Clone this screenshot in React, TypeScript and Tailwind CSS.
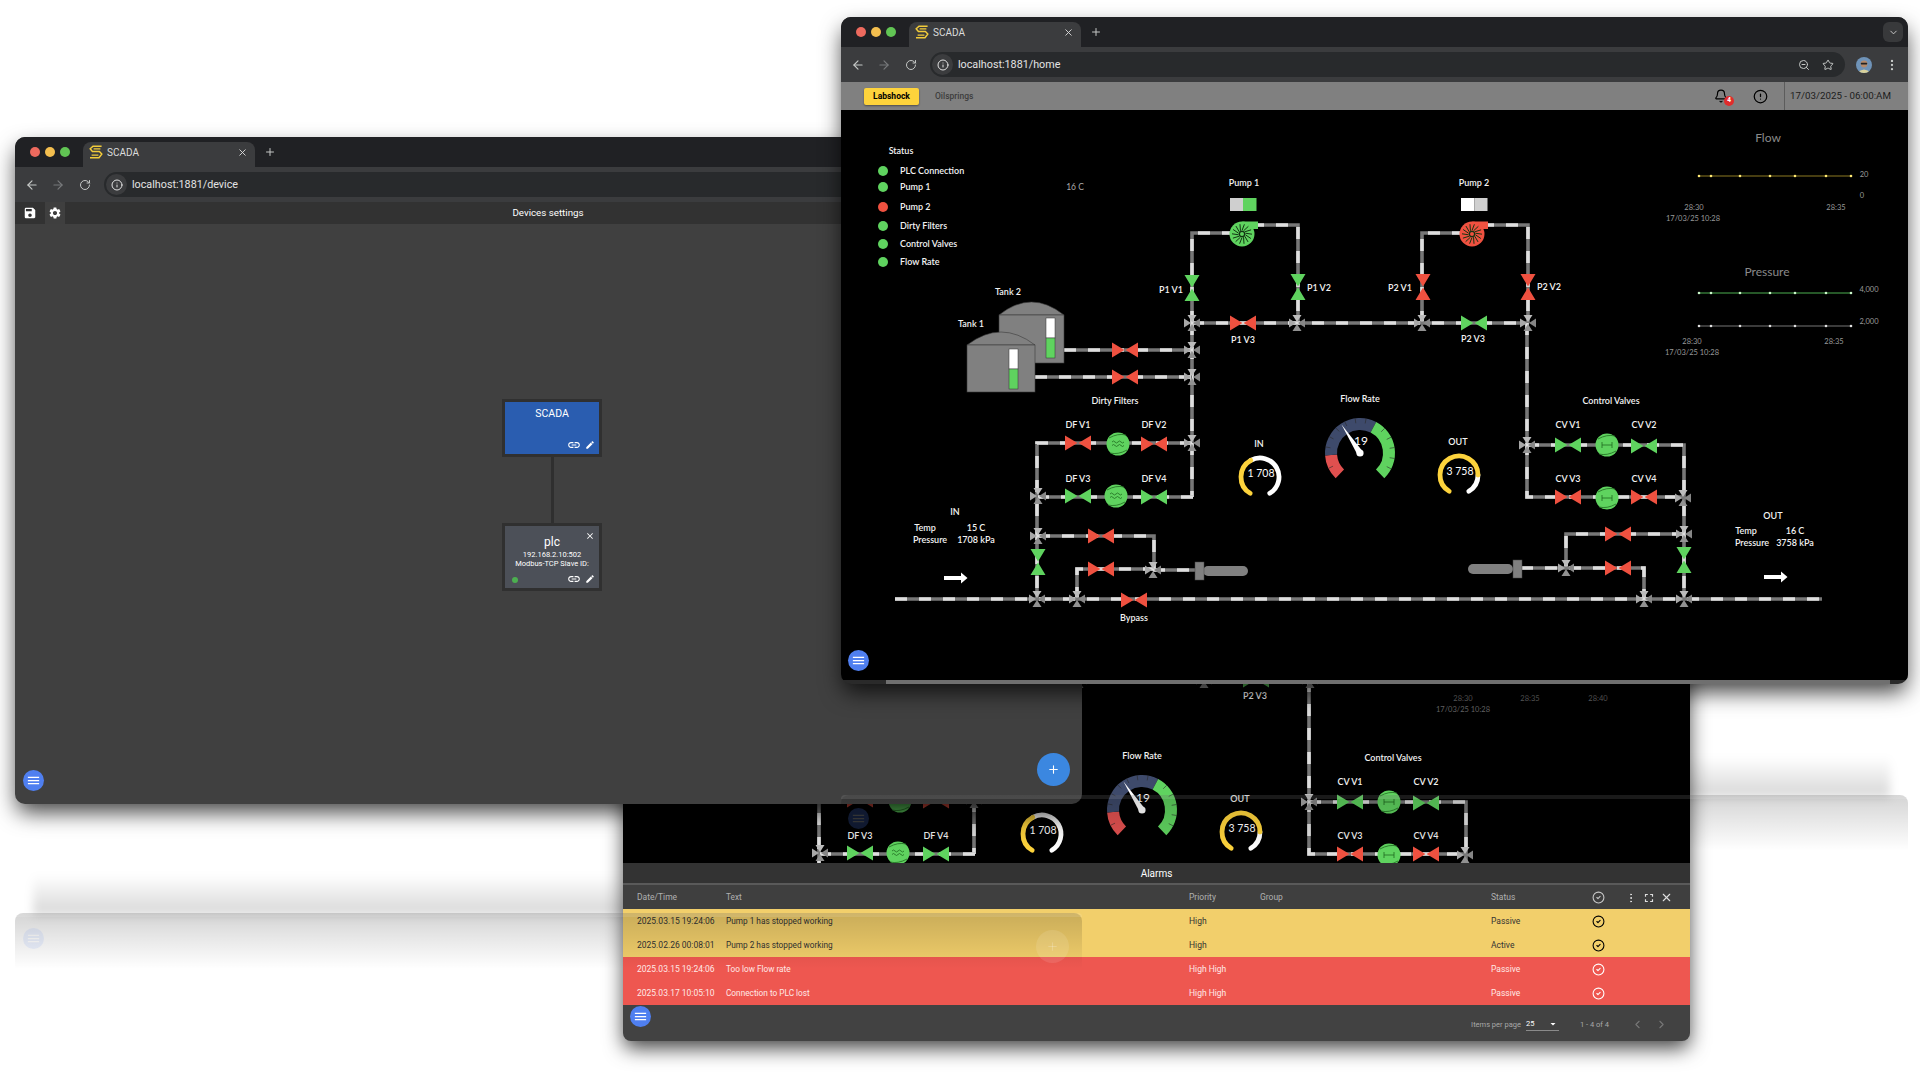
import { ArrowLeft, ArrowRight, RotateCw, Info, ZoomOut, Star, X, Plus, ChevronDown, EllipsisVertical, Bell, CircleAlert, CircleCheck, ChevronLeft, ChevronRight } from "lucide-react";
import { MdSave, MdSettings, MdLink, MdEdit, MdClose, MdMenu, MdFullscreen, MdArrowDropDown } from "react-icons/md";

const GREEN = "#5fd35f";
const RED = "#ef5140";

// pipes are written in the coordinates of the big window on the 1920 canvas
const PIPES = [
  "M1192 323 V233 H1232",
  "M1252 225 H1298 V323",
  "M1422 323 V233 H1462",
  "M1482 225 H1528 V323",
  "M1192 323 H1528",
  "M1192 323 V497",
  "M1064 350 H1192",
  "M1035 377 H1192",
  "M1192 443 H1037 V599",
  "M1193 497 H1038",
  "M1038 536 H1154 V570",
  "M1077 599 V569 H1153",
  "M1153 570 H1203",
  "M895 599 H1822",
  "M1527 323 V497 H1683",
  "M1527 445 H1684 V599",
  "M1684 534 H1566 V568",
  "M1521 568 H1644 V599",
];

const H_VALVES: [number, number, string][] = [
  [1243, 323, RED], [1474, 323, GREEN], [1125, 350, RED], [1125, 377, RED],
  [1078, 443, RED], [1154, 444, RED], [1078, 496, GREEN], [1154, 497, GREEN],
  [1101, 536, RED], [1101, 569, RED], [1134, 600, RED],
  [1568, 445, GREEN], [1644, 446, GREEN], [1568, 497, RED], [1644, 497, RED],
  [1618, 534, RED], [1618, 568, RED],
];

const V_VALVES: [number, number, string][] = [
  [1192, 288, GREEN], [1298, 287, GREEN], [1423, 287, RED], [1528, 287, RED],
  [1038, 562, GREEN], [1684, 560, GREEN],
];

const JUNCTIONS = [
  [1192, 323], [1297, 323], [1422, 323], [1528, 323], [1192, 350], [1192, 377], [1192, 443],
  [1038, 496], [1038, 536], [1037, 599], [1077, 599], [1153, 570],
  [1527, 445], [1683, 498], [1684, 534], [1566, 568], [1644, 599], [1684, 599],
];

const LABELS: [string, number, number][] = [
  ["Status", 901, 150],
  ["Pump 1", 1244, 182], ["Pump 2", 1474, 182],
  ["P1 V1", 1171, 289], ["P1 V2", 1319, 287], ["P2 V1", 1400, 287], ["P2 V2", 1549, 286],
  ["P1 V3", 1243, 339], ["P2 V3", 1473, 338],
  ["Tank 2", 1008, 291], ["Tank 1", 971, 323],
  ["Dirty Filters", 1115, 400], ["DF V1", 1078, 424], ["DF V2", 1154, 424], ["DF V3", 1078, 478], ["DF V4", 1154, 478],
  ["Bypass", 1134, 617], ["Flow Rate", 1360, 398],
  ["IN", 1259, 443], ["OUT", 1458, 441],
  ["Control Valves", 1611, 400], ["CV V1", 1568, 424], ["CV V2", 1644, 424], ["CV V3", 1568, 478], ["CV V4", 1644, 478],
  ["IN", 955, 511], ["Temp", 925, 527], ["15 C", 976, 527], ["Pressure", 930, 539], ["1708 kPa", 976, 539],
  ["OUT", 1773, 515], ["Temp", 1746, 530], ["16 C", 1795, 530], ["Pressure", 1752, 542], ["3758 kPa", 1795, 542],
];

const STATUS: [string, number, string][] = [
  ["PLC Connection", 171, GREEN], ["Pump 1", 187, GREEN], ["Pump 2", 207, RED],
  ["Dirty Filters", 226, GREEN], ["Control Valves", 244, GREEN], ["Flow Rate", 262, GREEN],
];

const DOT_X = [1699, 1711, 1740, 1770, 1795, 1826, 1851];

function polar(cx: number, cy: number, r: number, deg: number) {
  const a = ((deg - 90) * Math.PI) / 180;
  return [cx + r * Math.cos(a), cy + r * Math.sin(a)];
}

function arc(cx: number, cy: number, r: number, from: number, to: number) {
  const [x1, y1] = polar(cx, cy, r, from);
  const [x2, y2] = polar(cx, cy, r, to);
  return `M${x1} ${y1} A${r} ${r} 0 ${to - from > 180 ? 1 : 0} 1 ${x2} ${y2}`;
}

function Label({ x, y, children, className = "fill-[#f2f2f2] text-[9px] font-semibold" }: { x: number; y: number; children: React.ReactNode; className?: string }) {
  return (
    <text x={x} y={y} textAnchor="middle" dominantBaseline="central" className={className}>
      {children}
    </text>
  );
}

function HValve({ x, y, color }: { x: number; y: number; color: string }) {
  return <path d={`M${x - 13} ${y - 7.5} L${x - 0.5} ${y} L${x - 13} ${y + 7.5}Z M${x + 13} ${y - 7.5} L${x + 0.5} ${y} L${x + 13} ${y + 7.5}Z`} fill={color} />;
}

function VValve({ x, y, color }: { x: number; y: number; color: string }) {
  return <path d={`M${x - 7.5} ${y - 13} L${x} ${y - 0.5} L${x + 7.5} ${y - 13}Z M${x - 7.5} ${y + 13} L${x} ${y + 0.5} L${x + 7.5} ${y + 13}Z`} fill={color} />;
}

function Junction({ x, y }: { x: number; y: number }) {
  return (
    <g>
      <path d={`M${x - 8} ${y - 4.5} L${x - 1} ${y} L${x - 8} ${y + 4.5}Z`} fill="#a8a8a8" />
      <path d={`M${x + 8} ${y - 4.5} L${x + 1} ${y} L${x + 8} ${y + 4.5}Z`} fill="#868686" />
      <path d={`M${x - 4.5} ${y - 8} L${x} ${y - 1} L${x + 4.5} ${y - 8}Z`} fill="#bcbcbc" />
      <path d={`M${x - 4.5} ${y + 8} L${x} ${y + 1} L${x + 4.5} ${y + 8}Z`} fill="#919191" />
    </g>
  );
}

function Pump({ x, y, color }: { x: number; y: number; color: string }) {
  return (
    <g>
      <path d={`M${x} ${y - 12.5} H${x + 16} V${y - 5} H${x + 10} Z`} fill={color} />
      <circle cx={x} cy={y} r={12.5} fill={color} />
      {Array.from({ length: 14 }).map((_, i) => {
        const a = (i * 360) / 14;
        const [x1, y1] = polar(x, y, 3.5, a);
        const [x2, y2] = polar(x, y, 10, a + 14);
        return <line key={i} x1={x1} y1={y1} x2={x2} y2={y2} stroke="#123312" strokeWidth="1" />;
      })}
      <circle cx={x} cy={y} r={2.6} fill={color} stroke="#123312" strokeWidth="1.2" />
    </g>
  );
}

function Rotor({ x, y, wave }: { x: number; y: number; wave: boolean }) {
  return (
    <g>
      <circle cx={x} cy={y} r={11.5} fill={GREEN} />
      <path d={`M${x - 9} ${y - 6} Q${x} ${y - 11} ${x + 8} ${y - 9} M${x - 8} ${y + 9} Q${x} ${y + 11} ${x + 9} ${y + 6}`} stroke="#1f6b1f" strokeWidth="0.8" fill="none" />
      {wave ? (
        <path d={`M${x - 6} ${y - 2} q1.5 -2 3 0 t3 0 t3 0 t3 0 M${x - 6} ${y + 1.5} q1.5 -2 3 0 t3 0 t3 0 t3 0`} stroke="#1f6b1f" strokeWidth="0.8" fill="none" />
      ) : (
        <path d={`M${x - 5} ${y - 3} V${y + 3} M${x + 5} ${y - 3} V${y + 3} M${x - 5} ${y} H${x + 5}`} stroke="#1f6b1f" strokeWidth="0.8" fill="none" />
      )}
    </g>
  );
}

function Tank({ x, y, w, h, dome, levelX, levelTop, levelMid, levelBottom }: { x: number; y: number; w: number; h: number; dome: number; levelX: number; levelTop: number; levelMid: number; levelBottom: number }) {
  return (
    <g>
      <path d={`M${x} ${y} Q${x + w / 2} ${y - dome * 2} ${x + w} ${y}Z`} fill="#808080" stroke="#3a3a3a" strokeWidth="0.6" />
      <rect x={x} y={y} width={w} height={h} fill="#808080" stroke="#3a3a3a" strokeWidth="0.6" />
      <rect x={levelX} y={levelTop} width={9} height={levelMid - levelTop} fill="#fff" stroke="#333" strokeWidth="0.5" />
      <rect x={levelX} y={levelMid} width={9} height={levelBottom - levelMid} fill={GREEN} stroke="#333" strokeWidth="0.5" />
    </g>
  );
}

function RingGauge({ x, y, split, value }: { x: number; y: number; split: number; value: string }) {
  return (
    <g fill="none" strokeWidth="4.8" strokeLinecap="round">
      <path d={arc(x, y, 19, split, 149)} stroke="#fff" />
      <path d={arc(x, y, 19, -149, split)} stroke="#fdd33c" />
      <Label x={x + 1} y={y - 4} className="fill-white text-[10.5px]">{value}</Label>
    </g>
  );
}

function FlowGauge() {
  const cx = 1360;
  const cy = 453;
  const [nx, ny] = polar(cx, cy, 34, -33);
  const [b1x, b1y] = polar(cx, cy, 3, 57);
  const [b2x, b2y] = polar(cx, cy, 3, -123);
  return (
    <g>
      <g fill="none" strokeWidth="12">
        <path d={arc(cx, cy, 29, -136, -94)} stroke="#e0504f" />
        <path d={arc(cx, cy, 29, -94, 27.5)} stroke="#3e4a6b" />
        <path d={arc(cx, cy, 29, 27.5, 136)} stroke={GREEN} />
      </g>
      {[-116, -80, -62, -44, -26, -8, 10, 45, 63, 81, 99, 117].map((a) => {
        const [x1, y1] = polar(cx, cy, 30, a);
        const [x2, y2] = polar(cx, cy, 35, a);
        return <line key={a} x1={x1} y1={y1} x2={x2} y2={y2} stroke="#2a2a2a" strokeWidth="0.6" />;
      })}
      <Label x={cx + 1} y={cy - 13} className="fill-white text-[12px]">19</Label>
      <path d={`M${nx} ${ny} L${b1x} ${b1y} L${b2x} ${b2y}Z`} fill="#fff" />
      <circle cx={cx} cy={cy} r={3.6} fill="#fff" />
    </g>
  );
}

function TrendLine({ y, line, dot }: { y: number; line: string; dot: string }) {
  return (
    <g>
      <line x1={1699} x2={1851} y1={y} y2={y} stroke={line} strokeWidth="1" />
      {DOT_X.map((x) => (
        <circle key={x} cx={x} cy={y} r={1.3} fill={dot} />
      ))}
    </g>
  );
}

const AXIS = "fill-[#9a9a9a] text-[7.5px]";

function Charts() {
  return (
    <g>
      <Label x={1768} y={137} className="fill-[#8a8a8a] text-[12px]">Flow</Label>
      <TrendLine y={176} line="#8d7a22" dot="#ffe974" />
      <Label x={1864} y={174} className={AXIS}>20</Label>
      <Label x={1862} y={195} className={AXIS}>0</Label>
      <Label x={1694} y={207} className={AXIS}>28:30</Label>
      <Label x={1836} y={207} className={AXIS}>28:35</Label>
      <Label x={1693} y={218} className={AXIS}>17/03/25 10:28</Label>

      <Label x={1767} y={271} className="fill-[#8a8a8a] text-[12px]">Pressure</Label>
      <TrendLine y={293} line="#4caf50" dot="#c9f7c9" />
      <TrendLine y={326} line="#777" dot="#e0e0e0" />
      <Label x={1869} y={289} className={AXIS}>4,000</Label>
      <Label x={1869} y={321} className={AXIS}>2,000</Label>
      <Label x={1692} y={341} className={AXIS}>28:30</Label>
      <Label x={1834} y={341} className={AXIS}>28:35</Label>
      <Label x={1692} y={352} className={AXIS}>17/03/25 10:28</Label>
    </g>
  );
}

function ScadaDiagram({ height, lower }: { height: number; lower?: boolean }) {
  return (
    <svg width={1067} height={height} viewBox={`841 110 1067 ${height}`} className="block shrink-0 bg-black font-['Lato',sans-serif]">
      {PIPES.map((d) => (
        <g key={d} fill="none" strokeWidth="3.6">
          <path d={d} stroke="#777" />
          <path d={d} stroke="#dedede" strokeDasharray="12 12" />
        </g>
      ))}
      {JUNCTIONS.map(([x, y]) => <Junction key={`${x}-${y}`} x={x} y={y} />)}
      {H_VALVES.map(([x, y, c]) => <HValve key={`${x}-${y}`} x={x} y={y} color={c} />)}
      {V_VALVES.map(([x, y, c]) => <VValve key={`${x}-${y}`} x={x} y={y} color={c} />)}

      <Pump x={1242} y={234} color={GREEN} />
      <Pump x={1472} y={234} color={RED} />
      <rect x={1230} y={198} width={13} height={13} fill="#cfcfcf" />
      <rect x={1243} y={198} width={13.5} height={13} fill={GREEN} />
      <rect x={1461} y={198} width={13.5} height={13} fill="#fff" />
      <rect x={1474.5} y={198} width={13} height={13} fill="#cfcfcf" />

      <Rotor x={1118} y={444} wave />
      <Rotor x={1116} y={496} wave />
      <Rotor x={1607} y={445} wave={false} />
      <Rotor x={1607} y={498} wave={false} />

      <Tank x={999} y={315} w={65} h={48} dome={13} levelX={1046} levelTop={318} levelMid={338} levelBottom={358} />
      <Tank x={967} y={345} w={68} h={47} dome={13} levelX={1009} levelTop={349} levelMid={369} levelBottom={389} />

      <rect x={1203} y={566} width={45} height={10} rx={5} fill="#808080" />
      <rect x={1195} y={562} width={9} height={18} fill="#808080" stroke="#444" strokeWidth="0.5" />
      <rect x={1468} y={564} width={45} height={10} rx={5} fill="#808080" />
      <rect x={1513} y={560} width={9} height={18} fill="#808080" stroke="#444" strokeWidth="0.5" />

      <path d="M944 576 H961 V572.5 L967.5 578 L961 583.5 V580 H944Z" fill="#fff" />
      <path d="M1764 575 H1781 V571.5 L1787.5 577 L1781 582.5 V579 H1764Z" fill="#fff" />

      <RingGauge x={1260} y={477} split={-29} value="1 708" />
      <RingGauge x={1459} y={475} split={90} value="3 758" />
      <FlowGauge />

      {LABELS.map(([t, x, y]) => (
        <Label key={`${t}-${x}`} x={x} y={y}>{t}</Label>
      ))}
      {STATUS.map(([t, y, c]) => (
        <g key={t}>
          <circle cx={883} cy={y} r={5} fill={c} />
          <text x={900} y={y - 1} dominantBaseline="central" className="fill-[#f2f2f2] text-[9px] font-semibold">{t}</text>
        </g>
      ))}
      <Label x={1075} y={187} className="fill-[#aaa] text-[8.5px]">16 C</Label>

      {lower ? (
        <g>
          <Label x={1681} y={341} className="fill-[#666] text-[7.5px]">28:30</Label>
          <Label x={1748} y={341} className="fill-[#666] text-[7.5px]">28:35</Label>
          <Label x={1816} y={341} className="fill-[#666] text-[7.5px]">28:40</Label>
          <Label x={1681} y={352} className="fill-[#666] text-[7.5px]">17/03/25 10:28</Label>
        </g>
      ) : (
        <Charts />
      )}
    </svg>
  );
}

function Favicon() {
  return (
    <svg width="14" height="14" viewBox="0 0 14 14" fill="none" stroke="#f2cb3a" strokeWidth="1.5">
      <path d="M12.6 1.2 H4 L1.2 3.8 L3.4 6.4 H10.4 L12.8 9 L10 12.8 H1" />
      <path d="M11.4 3.8 H4.6 M2.6 10.2 H9.4" strokeWidth="1.2" />
    </svg>
  );
}

function Avatar() {
  return (
    <svg width="16" height="16" viewBox="0 0 16 16" className="rounded-full">
      <rect width="16" height="16" fill="#6f93b8" />
      <path d="M1 16 Q8 9 15 16Z" fill="#d9d29c" />
      <circle cx="8" cy="7" r="3.4" fill="#b58a6a" />
      <rect x="4.8" y="5.8" width="6.4" height="1.6" rx="0.6" fill="#222" />
    </svg>
  );
}

function Chrome({ url, wide }: { url: string; wide?: boolean }) {
  return (
    <div className="shrink-0">
      <div className="relative flex h-[30px] items-end bg-[#202124] pl-[68px]">
        <div className="absolute left-[15px] top-[10px] flex gap-[5px]">
          <span className="h-[10px] w-[10px] rounded-full bg-[#ed6a5e]" />
          <span className="h-[10px] w-[10px] rounded-full bg-[#f4bf4f]" />
          <span className="h-[10px] w-[10px] rounded-full bg-[#61c554]" />
        </div>
        <div className="flex h-[25px] w-[172px] items-center rounded-t-[8px] bg-[#3b3c3e] pb-[5px] pl-[6px] pr-[7px]">
          <Favicon />
          <span className="ml-[4px] flex-1 text-[10px] text-[#dcdcdc]">SCADA</span>
          <X size={11} className="text-[#dcdcdc]" />
        </div>
        <Plus size={12} className="mb-[9px] ml-[9px] text-[#c4c7c5]" />
        {wide && (
          <div className="absolute right-[5px] top-[5px] flex h-[20px] w-[20px] items-center justify-center rounded-[6px] bg-[#38393b]">
            <ChevronDown size={11} className="text-[#d0d0d0]" />
          </div>
        )}
      </div>
      <div className="flex h-[35px] items-center bg-[#3b3c3e] pl-[10px]">
        <ArrowLeft size={14} className="text-[#c4c7c5]" />
        <ArrowRight size={14} className="ml-[12px] text-[#77797b]" />
        <RotateCw size={12} className="ml-[14px] text-[#c4c7c5]" />
        <div className="ml-[13px] flex h-[25px] flex-1 items-center rounded-l-full rounded-r-full bg-[#282a2c] pl-[2px]">
          <span className="flex h-[21px] w-[21px] items-center justify-center rounded-full bg-[#3b3c3e]">
            <Info size={12} className="text-[#e3e3e3]" />
          </span>
          <span className="ml-[5px] flex-1 pt-[1px] text-[10.75px] text-[#e3e3e3]">{url}</span>
          {wide && <ZoomOut size={12} className="text-[#c4c7c5]" />}
          {wide && <Star size={12} className="ml-[12px] mr-[11px] text-[#c4c7c5]" />}
        </div>
        {wide && (
          <div className="flex items-center">
            <span className="ml-[11px]"><Avatar /></span>
            <EllipsisVertical size={14} className="ml-[13px] mr-[9px] text-[#c4c7c5]" />
          </div>
        )}
      </div>
    </div>
  );
}

function MenuButton() {
  return (
    <span className="flex h-[21px] w-[21px] items-center justify-center rounded-full bg-[#4f7ff0] text-white">
      <MdMenu size={15} />
    </span>
  );
}

function DeviceNode({ children, fill, close, dot }: { children?: React.ReactNode; fill: string; close?: boolean; dot?: boolean }) {
  return (
    <div className={`relative flex w-[100px] flex-col items-center border-[3px] border-[#303030] text-white ${fill}`}>
      {close && <MdClose size={10} className="absolute right-[4px] top-[5px]" />}
      {children}
      {dot && <span className="absolute bottom-[5px] left-[7px] h-[6px] w-[6px] rounded-full bg-[#4caf50]" />}
      <div className="absolute bottom-[2px] right-[4px] flex items-center gap-[4px]">
        <MdLink size={14} />
        <MdEdit size={10} />
      </div>
    </div>
  );
}

function DevicesWindow() {
  return (
    <div className="absolute left-[15px] top-[137px] flex h-[667px] w-[1067px] flex-col overflow-hidden rounded-[10px] bg-[#404040] shadow-[0_10px_22px_-2px_rgba(0,0,0,0.75)]">
      <Chrome url="localhost:1881/device" />
      <div className="relative flex h-[22px] shrink-0 items-center bg-[#323232] text-white">
        <span className="flex h-[22px] w-[30px] items-center justify-center"><MdSave size={14} /></span>
        <span className="flex h-[22px] w-[20px] items-center justify-center bg-[#3f3f3f]"><MdSettings size={14} /></span>
        <span className="absolute left-[493px] w-[80px] text-center text-[9.75px]">Devices settings</span>
      </div>
      <div className="relative flex-1">
        <div className="absolute left-[487px] top-[175px] flex flex-col items-center">
          <DeviceNode fill="h-[58px] bg-[#2a5db0]">
            <span className="mt-[4px] text-[10.5px]">SCADA</span>
          </DeviceNode>
          <div className="h-[66px] w-[3px] bg-[#2f2f2f]" />
          <DeviceNode fill="h-[68px] bg-[#4c5058]" close dot>
            <span className="mt-[9px] text-[12px] leading-[14px]">plc</span>
            <span className="mt-[1px] text-[7.5px] leading-[9px]">192.168.2.10:502</span>
            <span className="text-[7.5px] leading-[9px]">Modbus-TCP Slave ID:</span>
          </DeviceNode>
        </div>
        <span className="absolute bottom-[13px] left-[8px]"><MenuButton /></span>
        <span className="absolute bottom-[18px] right-[12px] flex h-[33px] w-[33px] items-center justify-center rounded-full bg-[#3b87e0] text-white">
          <Plus size={13} />
        </span>
      </div>
    </div>
  );
}

function HomeWindow() {
  return (
    <div className="absolute left-[841px] top-[17px] flex h-[667px] w-[1067px] flex-col overflow-hidden rounded-[10px] bg-[#2a2a2a] shadow-[0_10px_22px_-2px_rgba(0,0,0,0.75)]">
      <Chrome url="localhost:1881/home" wide />
      <div className="flex h-[28px] shrink-0 items-center bg-[#808080] pl-[23px]">
        <span className="flex h-[17px] w-[55px] items-center justify-center rounded-[2px] bg-[#fdd33c] text-[8.5px] font-bold text-black shadow-[0_1px_2px_rgba(0,0,0,0.4)]">Labshock</span>
        <span className="ml-[16px] text-[8.5px] font-medium text-[#3d3d3d]">Oilsprings</span>
        <span className="relative ml-auto text-black">
          <Bell size={14} />
          <span className="absolute -right-[6px] -bottom-[3px] flex h-[10px] w-[10px] items-center justify-center rounded-full bg-[#e02c2c] text-[6.5px] font-bold text-white">4</span>
        </span>
        <CircleAlert size={15} className="ml-[25px] text-black" />
        <span className="ml-[16px] flex h-[28px] w-[124px] items-center border-l border-[#5c5c5c] pl-[5px] text-[9.75px] text-[#1c1c1c]">17/03/2025 - 06:00:AM</span>
      </div>
      <div className="relative h-[570px] shrink-0">
        <ScadaDiagram height={570} />
        <span className="absolute bottom-[9px] left-[7px]"><MenuButton /></span>
      </div>
      <div className="ml-[45px] mr-[18px] h-[4px] shrink-0 bg-[#6f6f6f]" />
    </div>
  );
}

const ROWS = [
  { date: "2025.03.15 19:24:06", text: "Pump 1 has stopped working", priority: "High", status: "Passive", row: "bg-[#f2cf6b] text-[#333]", icon: "text-black" },
  { date: "2025.02.26 00:08:01", text: "Pump 2 has stopped working", priority: "High", status: "Active", row: "bg-[#f2cf6b] text-[#333]", icon: "text-black" },
  { date: "2025.03.15 19:24:06", text: "Too low Flow rate", priority: "High High", status: "Passive", row: "bg-[#ee5750] text-[#ffe9e7]", icon: "text-white" },
  { date: "2025.03.17 10:05:10", text: "Connection to PLC lost", priority: "High High", status: "Passive", row: "bg-[#ee5750] text-[#ffe9e7]", icon: "text-white" },
];

function Columns({ date, text, priority, group, status, children }: { date: string; text: string; priority: string; group?: string; status: string; children: React.ReactNode }) {
  return (
    <>
      <span className="w-[89px] text-[8.5px]">{date}</span>
      <span className="w-[463px] text-[8.25px]">{text}</span>
      <span className="w-[71px] text-[8.5px]">{priority}</span>
      <span className="w-[231px] text-[8.5px]">{group}</span>
      <span className="w-[101px] text-[8.5px]">{status}</span>
      {children}
    </>
  );
}

function AlarmsWindow() {
  return (
    <div className="absolute left-[623px] top-[467px] flex h-[574px] w-[1067px] flex-col overflow-hidden rounded-[8px] bg-[#424242] shadow-[0_8px_20px_-1px_rgba(0,0,0,0.75)]">
      <ScadaDiagram height={396} lower />
      <div className="flex h-[22px] shrink-0 items-center justify-center border-b-2 border-[#5a5a5a] bg-[#333] text-[10px] text-white">Alarms</div>
      <div className="flex h-[24px] shrink-0 items-center bg-[#3f3f3f] pl-[14px] pt-[1px] text-[#b0b0b0]">
        <Columns date="Date/Time" text="Text" priority="Priority" group="Group" status="Status">
          <CircleCheck size={13} className="text-[#c8c8c8]" />
          <EllipsisVertical size={12} className="ml-[20px] text-[#e0e0e0]" />
          <MdFullscreen size={14} className="ml-[5px] text-[#e0e0e0]" />
          <X size={13} className="ml-[4px] text-[#e0e0e0]" />
        </Columns>
      </div>
      {ROWS.map((r) => (
        <div key={r.date + r.text} className={`flex h-[24px] shrink-0 items-center pl-[14px] pt-[1px] ${r.row}`}>
          <Columns date={r.date} text={r.text} priority={r.priority} status={r.status}>
            <CircleCheck size={13} className={r.icon} />
          </Columns>
        </div>
      ))}
      <div className="relative flex flex-1 items-center justify-end pr-[22px] pt-[3px] text-[7.5px] text-[#a8a8a8]">
        <span className="absolute left-[7px] top-[1px]"><MenuButton /></span>
        <span>Items per page</span>
        <span className="ml-[5px] flex w-[33px] items-center justify-between border-b border-[#8a8a8a] text-white">25<MdArrowDropDown size={12} /></span>
        <span className="ml-[21px]">1 - 4 of 4</span>
        <ChevronLeft size={13} className="ml-[22px] text-[#777]" />
        <ChevronRight size={13} className="ml-[11px] text-[#777]" />
      </div>
    </div>
  );
}

// mirrored floor under a window: its reflected shadow sits above, the faded body below
function FloorShadow({ className }: { className: string }) {
  return <div className={`absolute h-[40px] w-[1030px] bg-gradient-to-b from-transparent to-[rgba(0,0,0,0.16)] blur-[5px] ${className}`} />;
}

function Reflection({ className, children }: { className: string; children?: React.ReactNode }) {
  return (
    <div className={`pointer-events-none absolute h-[56px] w-[1067px] rounded-t-[8px] bg-gradient-to-b from-[rgba(0,0,0,0.17)] to-transparent ${className}`}>
      <div className="h-[4px] rounded-t-[8px] bg-white/10" />
      {children}
    </div>
  );
}

export default function App() {
  return (
    <div className="relative h-[1080px] w-[1920px] overflow-hidden bg-white font-['Roboto',sans-serif]">
      <FloorShadow className="left-[33px] top-[875px]" />
      <FloorShadow className="left-[860px] top-[757px]" />
      <AlarmsWindow />
      <DevicesWindow />
      <HomeWindow />
      <Reflection className="left-[15px] top-[913px]">
        <span className="absolute left-[8px] top-[15px] opacity-10"><MenuButton /></span>
        <span className="absolute left-[1021px] top-[17px] flex h-[33px] w-[33px] items-center justify-center rounded-full bg-white/10 text-white/20"><Plus size={13} /></span>
      </Reflection>
      <Reflection className="left-[841px] top-[795px]">
        <span className="absolute left-[7px] top-[13px] opacity-20"><MenuButton /></span>
      </Reflection>
    </div>
  );
}
